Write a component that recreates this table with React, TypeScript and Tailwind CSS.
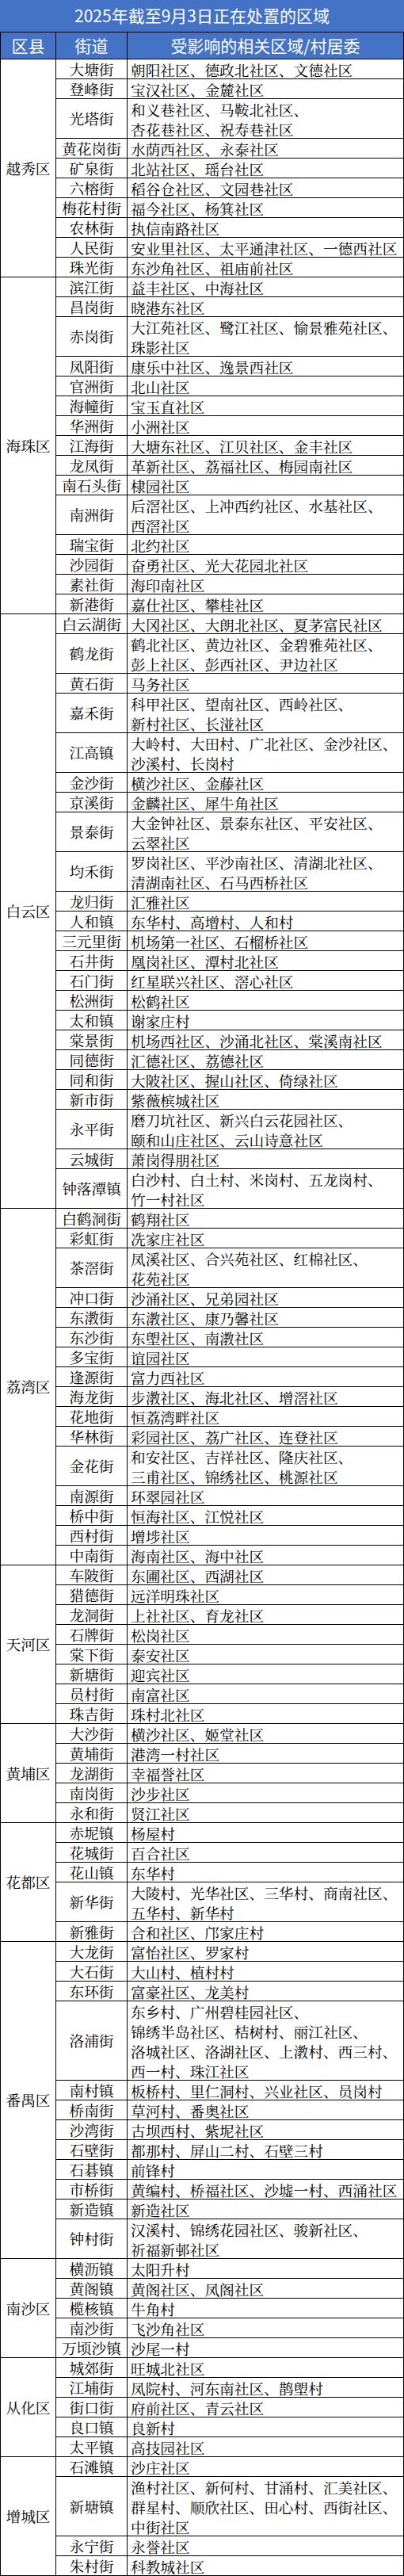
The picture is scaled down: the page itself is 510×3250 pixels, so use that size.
import React from 'react';

type Street = { name: string; lines: string[] };
type District = { name: string; streets: Street[] };

const s = (name: string, ...lines: string[]): Street => ({ name, lines });

const data: District[] = [
    {
        name: '越秀区',
        streets: [
            s('大塘街', '朝阳社区、德政北社区、文德社区'),
            s('登峰街', '宝汉社区、金麓社区'),
            s('光塔街', '和义巷社区、马鞍北社区、', '杏花巷社区、祝寿巷社区'),
            s('黄花岗街', '水荫西社区、永泰社区'),
            s('矿泉街', '北站社区、瑶台社区'),
            s('六榕街', '稻谷仓社区、文园巷社区'),
            s('梅花村街', '福今社区、杨箕社区'),
            s('农林街', '执信南路社区'),
            s('人民街', '安业里社区、太平通津社区、一德西社区'),
            s('珠光街', '东沙角社区、祖庙前社区'),
        ],
    },
    {
        name: '海珠区',
        streets: [
            s('滨江街', '益丰社区、中海社区'),
            s('昌岗街', '晓港东社区'),
            s('赤岗街', '大江苑社区、鹭江社区、愉景雅苑社区、', '珠影社区'),
            s('凤阳街', '康乐中社区、逸景西社区'),
            s('官洲街', '北山社区'),
            s('海幢街', '宝玉直社区'),
            s('华洲街', '小洲社区'),
            s('江海街', '大塘东社区、江贝社区、金丰社区'),
            s('龙凤街', '革新社区、荔福社区、梅园南社区'),
            s('南石头街', '棣园社区'),
            s('南洲街', '后滘社区、上冲西约社区、水基社区、', '西滘社区'),
            s('瑞宝街', '北约社区'),
            s('沙园街', '奋勇社区、光大花园北社区'),
            s('素社街', '海印南社区'),
            s('新港街', '嘉仕社区、攀桂社区'),
        ],
    },
    {
        name: '白云区',
        streets: [
            s('白云湖街', '大冈社区、大朗北社区、夏茅富民社区'),
            s('鹤龙街', '鹤北社区、黄边社区、金碧雅苑社区、', '彭上社区、彭西社区、尹边社区'),
            s('黄石街', '马务社区'),
            s('嘉禾街', '科甲社区、望南社区、西岭社区、', '新村社区、长湴社区'),
            s('江高镇', '大岭村、大田村、广北社区、金沙社区、', '沙溪村、长岗村'),
            s('金沙街', '横沙社区、金藤社区'),
            s('京溪街', '金麟社区、犀牛角社区'),
            s('景泰街', '大金钟社区、景泰东社区、平安社区、', '云翠社区'),
            s('均禾街', '罗岗社区、平沙南社区、清湖北社区、', '清湖南社区、石马西桥社区'),
            s('龙归街', '汇雅社区'),
            s('人和镇', '东华村、高增村、人和村'),
            s('三元里街', '机场第一社区、石榴桥社区'),
            s('石井街', '凰岗社区、潭村北社区'),
            s('石门街', '红星联兴社区、滘心社区'),
            s('松洲街', '松鹤社区'),
            s('太和镇', '谢家庄村'),
            s('棠景街', '机场西社区、沙涌北社区、棠溪南社区'),
            s('同德街', '汇德社区、荔德社区'),
            s('同和街', '大陂社区、握山社区、倚绿社区'),
            s('新市街', '紫薇槟城社区'),
            s('永平街', '磨刀坑社区、新兴白云花园社区、', '颐和山庄社区、云山诗意社区'),
            s('云城街', '萧岗得朋社区'),
            s('钟落潭镇', '白沙村、白土村、米岗村、五龙岗村、', '竹一村社区'),
        ],
    },
    {
        name: '荔湾区',
        streets: [
            s('白鹤洞街', '鹤翔社区'),
            s('彩虹街', '冼家庄社区'),
            s('茶滘街', '凤溪社区、合兴苑社区、红棉社区、', '花苑社区'),
            s('冲口街', '沙涌社区、兄弟园社区'),
            s('东漖街', '东漖社区、康乃馨社区'),
            s('东沙街', '东塱社区、南漖社区'),
            s('多宝街', '谊园社区'),
            s('逢源街', '富力西社区'),
            s('海龙街', '步漖社区、海北社区、增滘社区'),
            s('花地街', '恒荔湾畔社区'),
            s('华林街', '彩园社区、荔广社区、连登社区'),
            s('金花街', '和安社区、吉祥社区、隆庆社区、', '三甫社区、锦绣社区、桃源社区'),
            s('南源街', '环翠园社区'),
            s('桥中街', '恒海社区、江悦社区'),
            s('西村街', '增埗社区'),
            s('中南街', '海南社区、海中社区'),
        ],
    },
    {
        name: '天河区',
        streets: [
            s('车陂街', '东圃社区、西湖社区'),
            s('猎德街', '远洋明珠社区'),
            s('龙洞街', '上社社区、育龙社区'),
            s('石牌街', '松岗社区'),
            s('棠下街', '泰安社区'),
            s('新塘街', '迎宾社区'),
            s('员村街', '南富社区'),
            s('珠吉街', '珠村北社区'),
        ],
    },
    {
        name: '黄埔区',
        streets: [
            s('大沙街', '横沙社区、姬堂社区'),
            s('黄埔街', '港湾一村社区'),
            s('龙湖街', '幸福誉社区'),
            s('南岗街', '沙步社区'),
            s('永和街', '贤江社区'),
        ],
    },
    {
        name: '花都区',
        streets: [
            s('赤坭镇', '杨屋村'),
            s('花城街', '百合社区'),
            s('花山镇', '东华村'),
            s('新华街', '大陵村、光华社区、三华村、商南社区、', '五华村、新华村'),
            s('新雅街', '合和社区、邝家庄村'),
        ],
    },
    {
        name: '番禺区',
        streets: [
            s('大龙街', '富怡社区、罗家村'),
            s('大石街', '大山村、植村村'),
            s('东环街', '富豪社区、龙美村'),
            s('洛浦街', '东乡村、广州碧桂园社区、', '锦绣半岛社区、桔树村、丽江社区、', '洛城社区、洛湖社区、上漖村、西三村、', '西一村、珠江社区'),
            s('南村镇', '板桥村、里仁洞村、兴业社区、员岗村'),
            s('桥南街', '草河村、番奥社区'),
            s('沙湾街', '古坝西村、紫坭社区'),
            s('石壁街', '都那村、屏山二村、石壁三村'),
            s('石碁镇', '前锋村'),
            s('市桥街', '黄编村、桥福社区、沙墟一村、西涌社区'),
            s('新造镇', '新造社区'),
            s('钟村街', '汉溪村、锦绣花园社区、骏新社区、', '祈福新邨社区'),
        ],
    },
    {
        name: '南沙区',
        streets: [
            s('横沥镇', '太阳升村'),
            s('黄阁镇', '黄阁社区、凤阁社区'),
            s('榄核镇', '牛角村'),
            s('南沙街', '飞沙角社区'),
            s('万顷沙镇', '沙尾一村'),
        ],
    },
    {
        name: '从化区',
        streets: [
            s('城郊街', '旺城北社区'),
            s('江埔街', '凤院村、河东南社区、鹊塱村'),
            s('街口街', '府前社区、青云社区'),
            s('良口镇', '良新村'),
            s('太平镇', '高技园社区'),
        ],
    },
    {
        name: '增城区',
        streets: [
            s('石滩镇', '沙庄社区'),
            s('新塘镇', '渔村社区、新何村、甘涌村、汇美社区、', '群星村、顺欣社区、田心村、西街社区、', '中街社区'),
            s('永宁街', '永誉社区'),
            s('朱村街', '科教城社区'),
        ],
    },
];

const rowHeight = (n: number) => n * 25;

const App: React.FC = () => {
    return (
        <div className="w-[510px] bg-white text-black font-['Noto_Serif_CJK_SC','Noto_Sans_CJK_SC',serif]">
            {/* title */}
            <div className="h-[41px] bg-[#4472c4] border-b border-black flex items-center justify-center font-['Noto_Sans_CJK_SC',sans-serif] text-white text-[21px]">
                2025年截至9月3日正在处置的区域
            </div>

            {/* header */}
            <div className="h-[34px] flex bg-[#4472c4] border-b border-black font-['Noto_Sans_CJK_SC',sans-serif] text-white text-[21px]">
                <div className="w-[71px] border-l border-r border-black flex items-center justify-center">区县</div>
                <div className="w-[90px] border-r border-black flex items-center justify-center">街道</div>
                <div className="flex-1 border-r border-black flex items-center justify-center">受影响的相关区域/村居委</div>
            </div>

            {data.map((d) => (
                <div key={d.name} className="flex">
                    <div className="w-[71px] shrink-0 border-l border-r border-b border-black flex items-center justify-center text-[18.7px]">
                        {d.name}
                    </div>
                    <div className="flex-1 flex flex-col">
                        {d.streets.map((st) => (
                            <div
                                key={st.name}
                                className="flex border-b border-black"
                                style={{ height: rowHeight(st.lines.length) }}
                            >
                                <div className="w-[90px] shrink-0 border-r border-black flex items-center justify-center text-[18.7px] whitespace-nowrap">
                                    {st.name}
                                </div>
                                <div className="flex-1 border-r border-black flex flex-col justify-center pl-[4px] text-[18.7px] leading-[25px] whitespace-nowrap">
                                    {st.lines.map((l, i) => (
                                        <span key={i} className="block">{l}</span>
                                    ))}
                                </div>
                            </div>
                        ))}
                    </div>
                </div>
            ))}
        </div>
    );
};

export default App;
